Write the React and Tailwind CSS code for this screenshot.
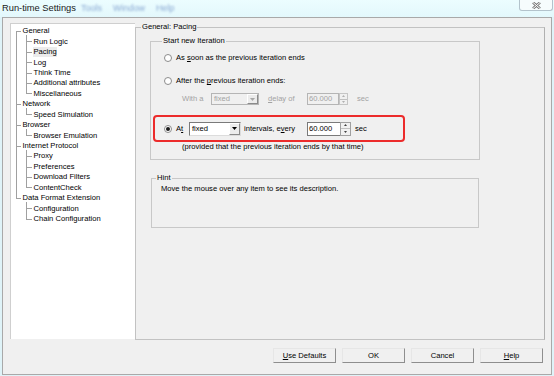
import React from 'react';

const ROW = 10.45;

const treeItems = [
  ['General', 0],
  ['Run Logic', 1],
  ['Pacing', 1],
  ['Log', 1],
  ['Think Time', 1],
  ['Additional attributes', 1],
  ['Miscellaneous', 1],
  ['Network', 0],
  ['Speed Simulation', 1],
  ['Browser', 0],
  ['Browser Emulation', 1],
  ['Internet Protocol', 0],
  ['Proxy', 1],
  ['Preferences', 1],
  ['Download Filters', 1],
  ['ContentCheck', 1],
  ['Data Format Extension', 0],
  ['Configuration', 1],
  ['Chain Configuration', 1],
];

const TreeLines = () => {
  const cy = (i) => 2 + ROW * i + ROW / 2;
  const lines = [];
  const roots = treeItems.map((t, i) => (t[1] === 0 ? i : -1)).filter((i) => i >= 0);
  lines.push(<line key="v0" x1="5.5" y1={cy(0)} x2="5.5" y2={cy(roots[roots.length - 1])} />);
  treeItems.forEach(([, level], i) => {
    if (level === 0) {
      lines.push(<line key={'h' + i} x1="5" y1={cy(i)} x2="10" y2={cy(i)} />);
    } else {
      lines.push(<line key={'h' + i} x1="15" y1={cy(i)} x2="21" y2={cy(i)} />);
    }
  });
  // child verticals
  roots.forEach((r, k) => {
    const end = k + 1 < roots.length ? roots[k + 1] - 1 : treeItems.length - 1;
    if (end > r) {
      lines.push(<line key={'v' + r} x1="15.5" y1={cy(r) + 4} x2="15.5" y2={cy(end)} />);
    }
  });
  return (
    <svg className="absolute left-0 top-0" width="120" height="230" stroke="#a0a0a0" strokeWidth="1" shapeRendering="crispEdges">
      {lines}
    </svg>
  );
};

const Tree = () => (
  <div className="relative w-[125px] h-[316px] bg-white border-l border-t border-[#cfcfcf] pt-[2px] shrink-0">
    <TreeLines />
    {treeItems.map(([label, level]) => (
      <div key={label} className={`h-[10.45px] flex items-center ${level === 0 ? 'pl-[11px]' : 'pl-[22px]'}`}>
        <span className={`leading-[10px] px-[0.5px] ${label === 'Pacing' ? 'bg-[#ebebeb]' : ''}`}>{label}</span>
      </div>
    ))}
  </div>
);

const Radio = ({ checked }) => (
  <span className="w-[8px] h-[8px] rounded-full border border-[#8c8c8c] bg-white flex items-center justify-center shrink-0">
    {checked && <span className="w-[4px] h-[4px] rounded-full bg-[#1a1a1a]" />}
  </span>
);

const Arrow = ({ color = '#000' }) => (
  <svg width="5" height="3" viewBox="0 0 5 3">
    <path d="M0 0 H5 L2.5 3 Z" fill={color} />
  </svg>
);

const Combo = ({ disabled, className }) => (
  <div
    className={`flex items-stretch border ${
      disabled ? 'border-[#b5b5b5] bg-[#f0f0f0] text-[#a3a3a3]' : 'border-[#7a7a7a] border-r-[#dcdcdc] border-b-[#dcdcdc] bg-white text-black'
    } ${className}`}
  >
    <span className="flex-1 pl-[2px] flex items-center">fixed</span>
    <span className="w-[11px] flex items-center justify-center bg-[#ececec] border border-white border-r-[#8a8a8a] border-b-[#8a8a8a]">
      <Arrow color={disabled ? '#a8a8a8' : '#000'} />
    </span>
  </div>
);

const SpinArrow = ({ up, color }) => (
  <svg width="3" height="2" viewBox="0 0 3 2">
    <path d={up ? 'M0 2 H3 L1.5 0 Z' : 'M0 0 H3 L1.5 2 Z'} fill={color} />
  </svg>
);

const Spin = ({ disabled, boxW, spinW, h }) => (
  <div className={`flex ${h}`}>
    <div
      className={`${boxW} border flex items-center pl-[1px] ${
        disabled ? 'border-[#b5b5b5] bg-[#f0f0f0] text-[#a3a3a3]' : 'border-[#7a7a7a] border-r-0 bg-white text-black'
      }`}
    >
      60.000
    </div>
    <div className={`${spinW} flex flex-col border ${disabled ? 'border-[#c5c5c5]' : 'border-[#a0a0a0]'} bg-[#f0f0f0]`}>
      <div className="flex-1 flex items-center justify-center border-b border-[#c0c0c0]">
        <SpinArrow up color={disabled ? '#b0b0b0' : '#404040'} />
      </div>
      <div className="flex-1 flex items-center justify-center">
        <SpinArrow color={disabled ? '#b0b0b0' : '#404040'} />
      </div>
    </div>
  </div>
);

const Button = ({ children }) => (
  <button className="w-[63px] h-[15px] flex items-center justify-center bg-[#f0f0f0] border border-[#e6e6e6] border-r-[#8e8e8e] border-b-[#8e8e8e] leading-none">
    {children}
  </button>
);

export default function App() {
  return (
    <div className="w-[554px] h-[376px] bg-[#dff3f8] flex flex-col overflow-hidden text-[7.6px] text-black font-['Liberation_Sans',Arial,sans-serif]">
      {/* title bar */}
      <div className="h-[17px] flex items-start bg-gradient-to-b from-[#ecfdff] to-[#e3f8fc] shrink-0">
        <span className="pl-[2px] leading-[16px] text-[9.3px] text-[#1a1a1a]">Run-time Settings</span>
        <div className="flex gap-[11px] ml-[5px] leading-[16px] text-[9px] text-[#5f83bf] blur-[1.1px] opacity-70">
          <span>Tools</span>
          <span>Window</span>
          <span>Help</span>
        </div>
        <div className="ml-auto mr-[1px] w-[34px] h-[11px] border border-t-0 border-[#b3c3cc] rounded-b-[3px] bg-[#f6fcfd] flex items-center justify-center">
          <svg width="9" height="7" viewBox="0 0 9 7">
            <path d="M1 0.5 L8 6.5 M8 0.5 L1 6.5" stroke="#777" strokeWidth="2.6" />
            <path d="M1 0.5 L8 6.5 M8 0.5 L1 6.5" stroke="#fff" strokeWidth="1" />
          </svg>
        </div>
      </div>

      {/* dialog body */}
      <div className="mx-[2px] mb-[1px] flex-1 border border-[#a9a9a9] bg-[#f0f0f0] flex flex-col">
        <div className="flex items-start pl-[7px] pt-[5px]">
          <Tree />
          <fieldset className="w-[410px] h-[317px] border border-[#c2c2c2] border-r-[#b0b0b0] min-w-0">
            <legend className="ml-[5px] px-[1px] leading-[8px]">General: Pacing</legend>
            <div className="flex flex-col">
              <fieldset className="ml-[14px] mt-[6px] w-[330px] h-[123px] border border-[#c8c8c8] min-w-0">
                <legend className="ml-[11px] px-[1px] leading-[8px]">Start new Iteration</legend>

                <div className="mt-[7px] h-[12px] flex items-center pl-[13px]">
                  <Radio />
                  <span className="ml-[4px]">
                    As <u>s</u>oon as the previous iteration ends
                  </span>
                </div>

                <div className="mt-[11px] h-[12px] flex items-center pl-[13px]">
                  <Radio />
                  <span className="ml-[4px]">
                    After the <u>p</u>revious iteration ends:
                  </span>
                </div>

                <div className="mt-[6px] h-[12px] flex items-center pl-[31px] text-[#a3a3a3]">
                  <span className="w-[29px]">With a</span>
                  <Combo disabled className="w-[48px] h-[12px]" />
                  <span className="ml-[9px] w-[39px]">
                    <u>d</u>elay of
                  </span>
                  <Spin disabled boxW="w-[32px]" spinW="w-[9px]" h="h-[12px]" />
                  <span className="ml-[9px]">sec</span>
                </div>

                <div className="mt-[10px] ml-[2px] w-[252px] h-[27px] border-2 border-[#ec2b2b] rounded-[4px] flex items-center pl-[9px]">
                  <Radio checked />
                  <span className="ml-[4px] w-[13px]">
                    A<u>t</u>
                  </span>
                  <Combo className="w-[52px] h-[14px]" />
                  <span className="ml-[3px] w-[63px]">
                    intervals, e<u>v</u>ery
                  </span>
                  <Spin boxW="w-[33px]" spinW="w-[11px]" h="h-[14px]" />
                  <span className="ml-[4px]">sec</span>
                </div>

                <div className="pl-[31px] leading-[9px]">(provided that the previous iteration ends by that time)</div>
              </fieldset>

              <fieldset className="ml-[15px] mt-[14px] w-[328px] h-[54px] border border-[#c8c8c8] min-w-0">
                <legend className="ml-[4px] px-[1px] leading-[8px]">Hint</legend>
                <div className="mt-[2px] pl-[9px] leading-[9px]">Move the mouse over any item to see its description.</div>
              </fieldset>
            </div>
          </fieldset>
        </div>

        <div className="mt-[8px] flex justify-end gap-[6px] pr-[8px]">
          <Button>
            <u>U</u>se Defaults
          </Button>
          <Button>OK</Button>
          <Button>Cancel</Button>
          <Button>
            <u>H</u>elp
          </Button>
        </div>
      </div>
    </div>
  );
}
